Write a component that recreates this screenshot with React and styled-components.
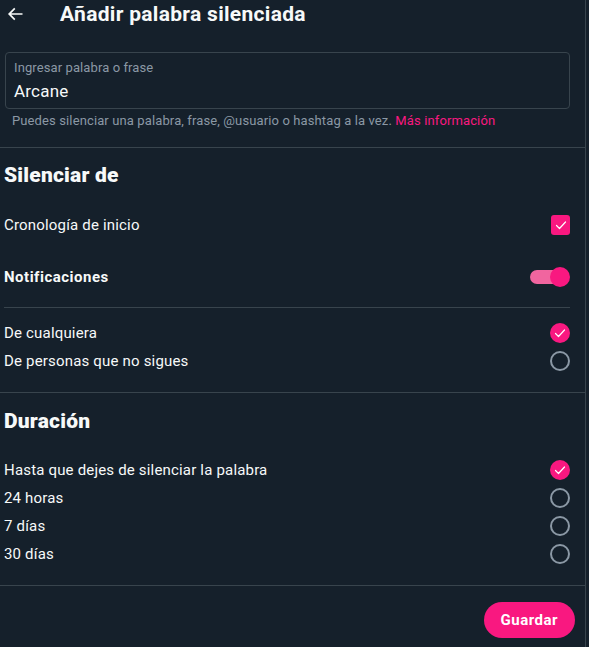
import React from 'react'
import styled, { createGlobalStyle } from 'styled-components'

const GlobalStyle = createGlobalStyle`
    html, body {
        margin: 0;
        padding: 0;
        background: #15202b;
    }
    body {
        font-family: Roboto, "Segoe UI", "Liberation Sans", sans-serif;
        color: #f7f9f9;
    }
`;

const Panel = styled.div`
    width: 586px;
    min-height: 647px;
    border-right: 1px solid #38444d;
    box-sizing: border-box;
    display: flex;
    flex-direction: column;
`;

const Header = styled.div`
    height: 28px;
    display: flex;
    align-items: center;
    padding-left: 5px;
`;

const Title = styled.h1`
    margin: 0 0 0 35px;
    font-size: 21px;
    line-height: 24px;
    font-weight: 700;
    letter-spacing: 0.3px;
`;

const Content = styled.div`
    padding: 0 15px 0 4px;
    display: flex;
    flex-direction: column;
`;

const InputBox = styled.div`
    margin: 24px 0 0 1px;
    height: 57px;
    border: 1px solid #38444d;
    border-radius: 4px;
    box-sizing: border-box;
    padding: 7px 8px 0;
    display: flex;
    flex-direction: column;
`;

const InputLabel = styled.span`
    font-size: 13px;
    line-height: 16px;
    color: #8b98a5;
    letter-spacing: 0.1px;
`;

const InputValue = styled.span`
    margin-top: 4px;
    font-size: 17px;
    line-height: 22px;
    letter-spacing: 0.2px;
`;

const Help = styled.p`
    margin: 4px 0 0 8px;
    font-size: 13px;
    line-height: 16px;
    color: #8b98a5;
    letter-spacing: 0.12px;
`;

const Link = styled.a`
    color: #f91880;
    text-decoration: none;
`;

const Divider = styled.hr`
    border: 0;
    border-top: 1px solid #38444d;
    margin: ${p => p.$mt || 0}px 0 0;
    width: 100%;
`;

const SectionTitle = styled.h2`
    margin: ${p => p.$mt}px 0 0;
    font-size: 21px;
    line-height: 24px;
    font-weight: 900;
    letter-spacing: 0.2px;
`;

const Row = styled.div`
    margin-top: ${p => p.$mt || 0}px;
    height: 28px;
    display: flex;
    align-items: center;
    justify-content: space-between;
    font-size: 15px;
    font-weight: ${p => p.$bold ? 700 : 400};
    letter-spacing: ${p => p.$bold ? 0.5 : 0.18}px;
`;

const CheckBox = styled.span`
    width: 19px;
    height: 20px;
    border-radius: 3px;
    background: #f91880;
    display: flex;
    align-items: center;
    justify-content: center;
`;

const Radio = styled.span`
    width: 20px;
    height: 20px;
    border-radius: 50%;
    box-sizing: border-box;
    display: flex;
    align-items: center;
    justify-content: center;
    background: ${p => p.$on ? '#f91880' : 'transparent'};
    border: ${p => p.$on ? 'none' : '2px solid #8b98a5'};
`;

const Toggle = styled.span`
    position: relative;
    width: 40px;
    height: 20px;
    display: flex;
    align-items: center;
`;

const Track = styled.span`
    width: 36px;
    height: 14px;
    border-radius: 7px;
    background: #f1659f;
`;

const Knob = styled.span`
    position: absolute;
    right: 0;
    top: 0;
    width: 20px;
    height: 20px;
    border-radius: 50%;
    background: #f91880;
`;

const Footer = styled.div`
    display: flex;
    justify-content: flex-end;
    padding: 16px 10px 0 0;
`;

const SaveButton = styled.button`
    height: 36px;
    padding: 0 17px;
    border: 0;
    border-radius: 18px;
    background: #f91880;
    color: #fff;
    font-family: inherit;
    font-size: 15px;
    font-weight: 700;
    letter-spacing: 0.5px;
`;

const Check = () => (
    <svg width="12" height="12" viewBox="0 0 24 24">
        <path d="M3 13l6 6L21 6" fill="none" stroke="#fff" strokeWidth="2.4" strokeLinecap="round" strokeLinejoin="round" />
    </svg>
);

const BackArrow = () => (
    <svg width="20" height="20" viewBox="0 0 24 24" fill="#f7f9f9">
        <path d="M7.414 13l5.043 5.04-1.414 1.42L3.586 12l7.457-7.46 1.414 1.42L7.414 11H21v2H7.414z" />
    </svg>
);

const durations = [
    'Hasta que dejes de silenciar la palabra',
    '24 horas',
    '7 días',
    '30 días',
];

export default function App() {
    return (
        <Panel>
            <GlobalStyle />
            <Header>
                <BackArrow />
                <Title>Añadir palabra silenciada</Title>
            </Header>
            <Content>
                <InputBox>
                    <InputLabel>Ingresar palabra o frase</InputLabel>
                    <InputValue>Arcane</InputValue>
                </InputBox>
                <Help>
                    Puedes silenciar una palabra, frase, @usuario o hashtag a la vez. <Link href="#">Más información</Link>
                </Help>
            </Content>
            <Divider $mt={18} />
            <Content>
                <SectionTitle $mt={15}>Silenciar de</SectionTitle>
                <Row $mt={24}>
                    Cronología de inicio
                    <CheckBox><Check /></CheckBox>
                </Row>
                <Row $mt={24} $bold>
                    Notificaciones
                    <Toggle><Track /><Knob /></Toggle>
                </Row>
                <Divider $mt={16} />
                <Row $mt={11}>
                    De cualquiera
                    <Radio $on><Check /></Radio>
                </Row>
                <Row>
                    De personas que no sigues
                    <Radio />
                </Row>
            </Content>
            <Divider $mt={17} />
            <Content>
                <SectionTitle $mt={16}>Duración</SectionTitle>
                {durations.map((d, i) => (
                    <Row key={d} $mt={i === 0 ? 23 : 0}>
                        {d}
                        <Radio $on={i === 0}>{i === 0 && <Check />}</Radio>
                    </Row>
                ))}
            </Content>
            <Divider $mt={17} />
            <Footer>
                <SaveButton>Guardar</SaveButton>
            </Footer>
        </Panel>
    )
}
